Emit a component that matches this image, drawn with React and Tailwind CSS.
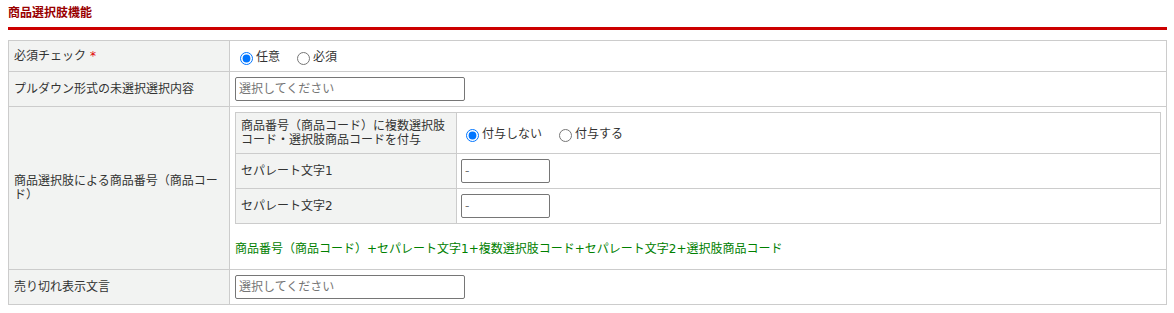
import React, { useState } from 'react';

const Radio = ({ name, label, checked, onChange }) => (
  <label className="inline-flex items-center mr-3">
    <input
      type="radio"
      name={name}
      checked={checked}
      onChange={onChange}
      className="w-[13px] h-[13px] mt-[3px] mr-[3px] ml-[5px] accent-[#0075ff]"
    />
    <span>{label}</span>
  </label>
);

const TextInput = ({ width, placeholder }) => (
  <input
    type="text"
    placeholder={placeholder}
    className={`${width} h-[24px] border border-[#767676] rounded-[2px] px-[3px] text-[12px] text-[#333] placeholder:text-[#757575] outline-none`}
  />
);

const App = () => {
  const [required, setRequired] = useState('optional');
  const [attach, setAttach] = useState('no');

  return (
    <div className="bg-white pl-2 pr-[7px] pb-2 font-['DejaVu_Sans','Noto_Sans_CJK_JP',sans-serif] text-[12px] text-[#333]">
      <h2 className="h-[30px] leading-[27px] font-bold text-[#990000] border-b-[3px] border-[#cc0000]">
        商品選択肢機能
      </h2>

      <div className="mt-[10px] border border-[#cccccc]">
        {/* 必須チェック */}
        <div className="grid grid-cols-[221px_1fr] border-b border-[#cccccc]">
          <div className="h-[30px] flex items-center px-[5px] bg-[#f2f3f2] border-r border-[#cccccc]">
            必須チェック <span className="text-[#e00000] ml-1">*</span>
          </div>
          <div className="flex items-center px-[5px] pt-[2px]">
            <Radio name="req" label="任意" checked={required === 'optional'} onChange={() => setRequired('optional')} />
            <Radio name="req" label="必須" checked={required === 'required'} onChange={() => setRequired('required')} />
          </div>
        </div>

        {/* プルダウン */}
        <div className="grid grid-cols-[221px_1fr] border-b border-[#cccccc]">
          <div className="h-[34px] flex items-center px-[5px] bg-[#f2f3f2] border-r border-[#cccccc]">
            プルダウン形式の未選択選択内容
          </div>
          <div className="flex items-center px-[5px]">
            <TextInput width="w-[230px]" placeholder="選択してください" />
          </div>
        </div>

        {/* 商品番号 */}
        <div className="grid grid-cols-[221px_1fr] border-b border-[#cccccc]">
          <div className="flex items-center px-[5px] leading-[14px] bg-[#f2f3f2] border-r border-[#cccccc]">
            商品選択肢による商品番号（商品コード）
          </div>
          <div className="pt-[5px] pb-[11px] px-[5px]">
            <div className="border border-[#cccccc]">
              <div className="grid grid-cols-[221px_1fr] border-b border-[#cccccc]">
                <div className="h-[40px] flex items-center px-[5px] leading-[14px] bg-[#f2f3f2] border-r border-[#cccccc]">
                  商品番号（商品コード）に複数選択肢コード・選択肢商品コードを付与
                </div>
                <div className="flex items-center px-1 pt-[2px]">
                  <Radio name="attach" label="付与しない" checked={attach === 'no'} onChange={() => setAttach('no')} />
                  <Radio name="attach" label="付与する" checked={attach === 'yes'} onChange={() => setAttach('yes')} />
                </div>
              </div>
              <div className="grid grid-cols-[221px_1fr] border-b border-[#cccccc]">
                <div className="h-[34px] flex items-center px-[5px] bg-[#f2f3f2] border-r border-[#cccccc]">
                  セパレート文字1
                </div>
                <div className="flex items-center px-1">
                  <TextInput width="w-[89px]" placeholder="-" />
                </div>
              </div>
              <div className="grid grid-cols-[221px_1fr]">
                <div className="h-[34px] flex items-center px-[5px] bg-[#f2f3f2] border-r border-[#cccccc]">
                  セパレート文字2
                </div>
                <div className="flex items-center px-1">
                  <TextInput width="w-[89px]" placeholder="-" />
                </div>
              </div>
            </div>
            <p className="mt-[16px] leading-[18px] text-[#008000]">
              商品番号（商品コード）+セパレート文字1+複数選択肢コード+セパレート文字2+選択肢商品コード
            </p>
          </div>
        </div>

        {/* 売り切れ */}
        <div className="grid grid-cols-[221px_1fr]">
          <div className="h-[34px] flex items-center px-[5px] bg-[#f2f3f2] border-r border-[#cccccc]">
            売り切れ表示文言
          </div>
          <div className="flex items-center px-[5px]">
            <TextInput width="w-[230px]" placeholder="選択してください" />
          </div>
        </div>
      </div>
    </div>
  );
};

export default App;
